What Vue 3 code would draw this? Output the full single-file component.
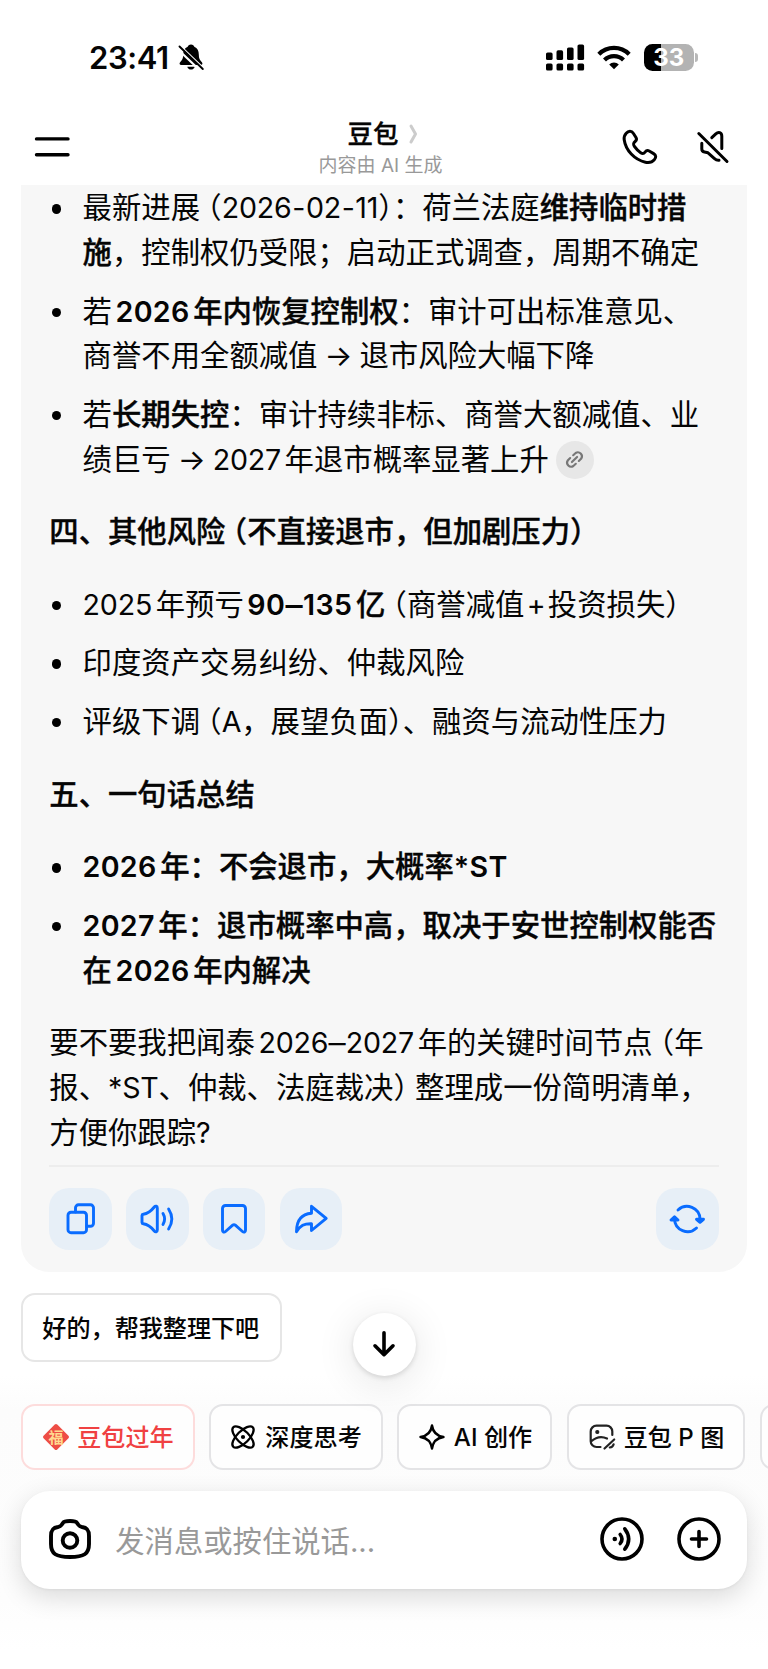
<script setup>
const blocks = [
  { type: 'list', items: [
    ['最新进展（2026-02-11）：荷兰法庭**维持临时措**', '**施**，控制权仍受限；启动正式调查，周期不确定'],
    ['若**2026年内恢复控制权**：审计可出标准意见、', '商誉不用全额减值→退市风险大幅下降'],
    ['若**长期失控**：审计持续非标、商誉大额减值、业', '绩巨亏→2027年退市概率显著上升@'],
  ] },
  { type: 'text', head: true, lines: ['**四、其他风险（不直接退市，但加剧压力）**'] },
  { type: 'list', items: [
    ['2025年预亏**90–135亿**（商誉减值+投资损失）'],
    ['印度资产交易纠纷、仲裁风险'],
    ['评级下调（A，展望负面）、融资与流动性压力'],
  ] },
  { type: 'text', head: true, lines: ['**五、一句话总结**'] },
  { type: 'list', items: [
    ['**2026年：不会退市，大概率*ST**'],
    ['**2027年：退市概率中高，取决于安世控制权能否**', '**在2026年内解决**'],
  ] },
  { type: 'text', lines: ['要不要我把闻泰2026–2027年的关键时间节点（年', '报、*ST、仲裁、法庭裁决）整理成一份简明清单，', '方便你跟踪?'] },
]

const isHan = (c) => /[\u4e00-\u9fff]/.test(c || '')
const isWord = (c) => /[0-9A-Za-z+]/.test(c || '')

// Splits a line into runs: Han text, Latin text, dashes, brackets, arrows and the source badge.
function runs(line) {
  const chunks = []
  line.split(/(\*\*)/).reduce((bold, part) => {
    if (part === '**') return !bold
    const found = part.match(/[（]|[）]|→|@|[-–]|[\x20-\x2c\x2e-\x3f\x41-\x7e]+|[^（）→@\x20-\x7e–]+/g) || []
    found.forEach((t) => chunks.push({ t, bold }))
    return bold
  }, false)
  return chunks.map((r, i) => {
    const prev = chunks[i - 1]?.t.slice(-1)
    const next = chunks[i + 1]?.t[0]
    const latin = /^[\x20-\x3f\x41-\x7e–]/.test(r.t)
    return {
      t: r.t,
      cls: {
        b: r.bold,
        lat: latin,
        hyphen: r.t === '-',
        dash: r.t === '–',
        plus: r.t === '+',
        open: r.t === '（',
        close: r.t === '）',
        tight: r.t === '）' && /[：、，]/.test(next || ''),
        arrow: r.t === '→',
        gapl: latin && isHan(prev) && isWord(r.t[0]),
        gapr: latin && isHan(next) && isWord(r.t.slice(-1)),
      },
    }
  })
}
</script>

<template>
  <div class="page">
    <div class="status">
      <span class="time">23:41</span>
      <svg class="bell" width="28" height="28" viewBox="0 0 28 28">
        <path d="M14 1.500c-1.900 0-3 1-3.300 2.300C7.500 5 6.200 8 6.200 11.500c0 4-1 5.500-2.900 7.500-1.300 1.400-.8 3 1 3h19.400c1.800 0 2.300-1.600 1-3-1.900-2-2.900-3.500-2.900-7.500 0-3.500-1.300-6.500-4.500-7.700C17 2.500 15.900 1.500 14 1.500zM10.300 23.700h7.400c-.4 1.700-1.900 2.900-3.700 2.900s-3.300-1.200-3.700-2.900z" />
        <path d="M2 5L25 27" stroke="#fff" stroke-width="2.200" transform="translate(1.400 -1.600)" />
        <path d="M2 5L25 27" stroke="#fff" stroke-width="2.200" transform="translate(-1.200 1.300)" />
        <path d="M2.500 3.500L25.800 26" stroke="#000" stroke-width="1.900" stroke-linecap="round" />
      </svg>
      <svg class="signal" width="39" height="27" viewBox="0 0 39 27">
        <rect x="0" y="8.500" width="6.600" height="7.500" rx="1.600" /><rect x="10.500" y="6.300" width="6.600" height="9.700" rx="1.600" /><rect x="21" y="3.500" width="6.600" height="12.500" rx="1.600" /><rect x="31.500" y="0.500" width="6.600" height="15.500" rx="1.600" />
        <rect x="0" y="19.500" width="6.600" height="7" rx="1.600" /><rect x="10.500" y="19.500" width="6.600" height="7" rx="1.600" /><rect x="21" y="19.500" width="6.600" height="7" rx="1.600" /><rect x="31.500" y="19.500" width="6.600" height="7" rx="1.600" />
      </svg>
      <svg class="wifi" width="34" height="25" viewBox="0 0 34 25" fill="none" stroke="#000" stroke-width="4.200">
        <path d="M1.800 9.200a21.500 21.500 0 0 1 30.400 0" /><path d="M7.500 15.100a13.400 13.400 0 0 1 19 0" />
        <path d="M12.200 19.400a6.800 6.800 0 0 1 9.600 0L17 24.300z" fill="#000" stroke="none" />
      </svg>
      <span class="battery">33</span><span class="nub"></span>
    </div>

    <header class="nav">
      <svg class="menu" width="36" height="22" viewBox="0 0 36 22" stroke="#000" stroke-width="3.400" stroke-linecap="round"><path d="M2.500 2.900H34M2.500 18.700H34" /></svg>
      <div class="title">
        <div class="name">豆包<svg width="9" height="20" viewBox="0 0 9 20" fill="none" stroke="#ccc" stroke-width="3" stroke-linecap="round" stroke-linejoin="round"><path d="M2 2L6.500 10L2 18" /></svg></div>
        <div class="sub">内容由 AI 生成</div>
      </div>
      <svg class="phone" width="36" height="36" viewBox="0 0 36 36" fill="none" stroke="#000" stroke-width="3" stroke-linejoin="round">
        <path d="M4.200 4.200C6.500 1.400 9.600 1.500 11.300 4.300L14 8.500C15 10.100 14.600 11.200 13.200 12.500C11.200 14.200 10.800 15 12.400 17.400C14.200 20 16.300 22.100 18.700 23.700C20.800 25.100 21.700 24.900 23 23.100C24.300 21.400 25.600 21.100 27.200 22L31.600 24.600C34.200 26.200 34.300 28.200 32.400 30.600C30.300 33.200 27 34.100 23.400 33.300C12.500 30.800 3.700 21.400 2.200 10.800C1.800 8.200 2.600 6 4.200 4.200Z" />
      </svg>
      <svg class="mute" width="34" height="34" viewBox="0 0 34 34" fill="none" stroke="#000" stroke-width="3" stroke-linecap="round" stroke-linejoin="round">
        <path d="M2.800 3.500L31 31.500M15.800 7.700L19.800 3.900C22.500 1.300 25.800 2.300 25.800 6.200V18.500M5.800 13.200V18.900C5.800 21 6.700 21.600 8.500 22L12 22.800L18.200 28.300C20 29.900 21.300 30.500 23 30.200" />
      </svg>
    </header>

    <main class="card">
      <template v-for="(block, bi) in blocks" :key="bi">
        <ul v-if="block.type === 'list'" class="list">
          <li v-for="(item, ii) in block.items" :key="ii">
            <div v-for="line in item" :key="line" class="line">
              <template v-for="(r, ri) in runs(line)" :key="ri"><span v-if="r.t === '@'" class="badge"><svg width="22" height="22" viewBox="0 0 22 22" fill="none" stroke="#777" stroke-width="2.500" stroke-linecap="round"><path d="M8 14L14 8M9.500 6L12.300 3.500a4.700 4.700 0 0 1 6.500 6.500L16 12.700M12.500 16L9.700 18.500a4.700 4.700 0 0 1-6.500-6.500L6 9.300" /></svg></span><span v-else :class="r.cls">{{ r.t }}</span></template>
            </div>
          </li>
        </ul>
        <div v-else class="para" :class="{ head: block.head }">
          <div v-for="line in block.lines" :key="line" class="line"><span v-for="(r, ri) in runs(line)" :key="ri" :class="r.cls">{{ r.t }}</span></div>
        </div>
      </template>
      <div class="rule"></div>
      <div class="actions">
        <button><svg width="32" height="32" viewBox="0 0 32 32"><rect x="3" y="9.200" width="18.500" height="20.500" rx="3" /><path d="M10.500 9V4.800a3 3 0 0 1 3-3h12a3 3 0 0 1 3 3v15.500a3 3 0 0 1-3 3H21.700" /></svg></button>
        <button><svg width="34" height="32" viewBox="0 0 34 32"><path d="M2 12.600C2 11.800 2.500 11.300 3.300 11.200C9 10.400 11.500 7.500 14.300 4C15.500 2.500 17.300 3 17.300 5V27C17.300 29 15.500 29.500 14.300 28C11.500 24.500 9 21.600 3.300 20.800C2.500 20.700 2 20.200 2 19.400Z" /><path d="M23 10.500c2 3.400 2 7.600 0 11M28.600 6c4 6.200 4 13.800 0 20" /></svg></button>
        <button><svg width="32" height="32" viewBox="0 0 32 32"><path d="M4.500 5.500a3 3 0 0 1 3-3h17a3 3 0 0 1 3 3v21.700c0 2-1.700 2.500-3 1.300L17.300 22.200a2 2 0 0 0-2.600 0L7.500 28.500c-1.300 1.200-3 .7-3-1.300z" /></svg></button>
        <button><svg width="34" height="32" viewBox="0 0 34 32"><path d="M17.500 3.300L32.200 15.400L17.500 27.500V20.700C10 20.500 6.500 22.500 2.500 28.700C2.500 17.500 7.500 11 17.500 10.200Z" /></svg></button>
        <button class="retry"><svg width="36" height="32" viewBox="0 0 36 32"><path d="M9 7a13 13 0 0 1 22 9M27.500 25a13 13 0 0 1-22-9" /><path d="M27.500 16.300h7L31 19.300zM2 17L5.500 13.800L9 17z" fill="#0a6cff" /></svg></button>
      </div>
    </main>

    <div class="followup">
      <button class="suggest">好的，帮我整理下吧</button>
      <button class="down"><svg width="24" height="28" viewBox="0 0 24 28" fill="none" stroke="#000" stroke-width="3.600" stroke-linecap="round" stroke-linejoin="round"><path d="M12 2.800V24.500M3 15.800L12 24.700L21 15.800" /></svg></button>
    </div>

    <div class="chips">
      <div class="chip red">
        <svg width="28" height="28" viewBox="0 0 28 28"><rect x="4.300" y="4.300" width="19.400" height="19.400" rx="1.800" fill="#ee4d45" transform="rotate(45 14 14)" /><text x="14" y="19.500" text-anchor="middle" class="fu">福</text></svg><span>豆包过年</span>
      </div>
      <div class="chip c2">
        <svg width="26" height="26" viewBox="0 0 26 26" fill="none" stroke="#000" stroke-width="2.300"><ellipse cx="13" cy="13" rx="13.800" ry="6" transform="rotate(45 13 13)" /><ellipse cx="13" cy="13" rx="13.800" ry="6" transform="rotate(-45 13 13)" /><circle cx="13" cy="13" r="2.100" fill="#000" stroke="none" /></svg><span>深度思考</span>
      </div>
      <div class="chip c3">
        <svg width="28" height="28" viewBox="0 0 28 28" fill="none" stroke="#000" stroke-width="2.400" stroke-linejoin="round"><path d="M14 2.500C15 9.500 18.500 13 25.500 14C18.500 15 15 18.500 14 25.500C13 18.500 9.500 15 2.500 14C9.500 13 13 9.500 14 2.500Z" /></svg><span>AI 创作</span>
      </div>
      <div class="chip c4">
        <svg width="28" height="28" viewBox="0 0 28 28" fill="none" stroke="#222" stroke-width="2.200" stroke-linecap="round" stroke-linejoin="round"><path d="M12.500 24H8.500A5.800 5.800 0 0 1 2.700 18.200V8.500A5.800 5.800 0 0 1 8.500 2.700H18.500A5.800 5.800 0 0 1 24.300 8.500V12M3 18.500C8 14 14 13 19 15.500M16.500 25.500L26.200 16.500M21.800 24.500C23.700 24.300 25 23.200 25.600 21.300" /><circle cx="9.300" cy="9" r="1.500" fill="#222" stroke-width="1.200" /></svg><span>豆包 P 图</span>
      </div>
      <div class="chip c5"></div>
    </div>

    <div class="input">
      <svg class="camera" width="44" height="42" viewBox="0 0 44 42" fill="none" stroke="#000" stroke-width="3.900" stroke-linejoin="round"><path d="M22 3C25.500 3 28 3.200 29 4.800L30.500 7C31.300 8.200 32.300 8.700 34 9C39.500 9.700 41 12.300 41 18V26C41 36 36 39 22 39S3 36 3 26V18C3 12.300 4.500 9.700 10 9C11.700 8.700 12.700 8.200 13.500 7L15 4.800C16 3.200 18.500 3 22 3Z" /><circle cx="22" cy="22.500" r="7.300" /></svg>
      <span class="hint">发消息或按住说话...</span>
      <svg class="voice" width="44" height="44" viewBox="0 0 44 44" fill="none" stroke="#000" stroke-width="3.600" stroke-linecap="round"><circle cx="22" cy="22" r="20" /><circle cx="14.800" cy="22" r="2.300" fill="#000" stroke="none" /><path d="M20.200 17.500q3.600 4.500 0 9M24.800 11.800q7.800 10.200 0 20.400" /></svg>
      <svg width="44" height="44" viewBox="0 0 44 44" fill="none" stroke="#000" stroke-width="3.600" stroke-linecap="round"><circle cx="22" cy="22" r="20" /><path d="M22 14.500V29.500M14.500 22H29.500" /></svg>
    </div>
  </div>
</template>

<style>
body { background: #fff; }
</style>

<style scoped>
.page { width: 768px; height: 1669px; overflow: hidden; box-sizing: border-box; background: linear-gradient(#fff 1375px, #fcfcfc 1410px, #fdfdfd 1600px, #fff 1650px); color: #050505; font-family: Inter, "Noto Sans CJK SC", sans-serif; text-spacing-trim: space-all; text-autospace: no-autospace; }
svg { display: block; flex: none; overflow: visible; }
button { border: 0; padding: 0; background: none; font: inherit; color: inherit; display: flex; align-items: center; justify-content: center; }

.status { height: 101px; padding: 13px 70px 0 89px; box-sizing: border-box; display: flex; align-items: center; }
.time { font-size: 31px; font-weight: 600; letter-spacing: -0.400px; width: 87.500px; white-space: nowrap; }
.signal { margin-left: auto; }
.wifi { margin-left: 12px; }
.battery { width: 49.500px; height: 27px; margin-left: 13px; border-radius: 8.500px; background: linear-gradient(90deg, #000 33%, #b3b3b3 33%); color: #fff; font-weight: 700; font-size: 24px; line-height: 27px; text-align: center; }
.nub { width: 3px; height: 9px; margin-left: 1.500px; border-radius: 0 4px 4px 0; background: #b8b8b8; }

.nav { height: 84px; display: flex; align-items: center; padding: 0 38px 0 34px; box-sizing: border-box; }
.menu { margin-top: 8px; }
.title { width: 140px; margin: 9px 0 0 241px; text-align: center; white-space: nowrap; }
.name { display: flex; align-items: center; justify-content: center; gap: 10px; font-size: 25.500px; font-weight: 500; -webkit-text-stroke: 0.300px; line-height: 34px; padding-left: 3px; }
.sub { font-size: 19px; line-height: 26px; color: #999; margin: 2px 0 0 -1px; }
.phone { margin-left: 170.500px; margin-top: 8px; }
.mute { margin-left: auto; margin-top: 8px; }

.card { height: 1086.500px; width: 725.400px; margin-left: 21.300px; box-sizing: border-box; padding: 1.300px 28px 0; background: #f7f7f7; border-radius: 0 0 28px 28px; font-size: 29.370px; line-height: 44.700px; display: flex; flex-direction: column; gap: 28px; }
.list { list-style: none; margin: 0; padding: 0 0 0 33.300px; display: flex; flex-direction: column; gap: 13.900px; }
li { position: relative; }
li::before { content: ""; position: absolute; left: -31px; top: 18px; width: 9.400px; height: 9.400px; border-radius: 50%; background: #000; }
.line { height: 44.700px; white-space: nowrap; }
.b { font-weight: 500; -webkit-text-stroke: 0.350px; }
.lat { font-size: 28.600px; letter-spacing: -0.200px; }
.lat.b { font-weight: 600; letter-spacing: 0.300px; -webkit-text-stroke: 0; }
.hyphen { padding: 0 0.700px; }
.dash { display: inline-block; transform: scaleX(1.200); margin: 0 1.700px; }
.gapl { margin-left: 3.600px; }
.gapr { margin-right: 3.600px; }
.plus { margin: 0 2.400px; }
.open, .close { font-feature-settings: "halt"; }
.open { margin-left: 7px; }
.close { margin-right: 7px; }
.tight { margin-right: 0; }
.arrow { display: inline-block; width: 42px; text-align: center; }
.badge { display: inline-flex; vertical-align: top; margin: 3px 0 0 7px; width: 38px; height: 38px; border-radius: 50%; background: #e7e7e7; align-items: center; justify-content: center; }
.badge svg { width: 19px; height: 19px; }
.rule { height: 2px; background: #ededed; margin-top: -18px; flex: none; }
.actions { display: flex; gap: 14.300px; margin-top: -7.500px; }
.actions button { width: 62.500px; height: 62.500px; border-radius: 20px; background: #e7eff7; }
.actions svg { fill: none; stroke: #0a6cff; stroke-width: 2.900; stroke-linecap: round; stroke-linejoin: round; }
.actions .retry { margin-left: auto; }

.followup { position: relative; height: 132px; padding: 21.800px 0 0 21.300px; box-sizing: border-box; }
.suggest { width: 261px; height: 69px; padding: 0 2px 3px 0; border: 2px solid #e6e6e6; border-radius: 14px; background: #fff; font-size: 24.100px; font-weight: 500; box-sizing: border-box; white-space: nowrap; }
.down { position: absolute; left: 352.500px; top: 41px; width: 63px; height: 63px; border-radius: 50%; background: #fff; box-shadow: 0 2px 5px rgba(0,0,0,.13), 0 6px 40px rgba(0,0,0,.11); }

.chips { display: flex; gap: 14.800px; padding-left: 21.300px; height: 66px; font-size: 24.100px; font-weight: 500; white-space: nowrap; }
.chip { flex: none; box-sizing: border-box; height: 66px; border: 2px solid #e4e4e6; border-radius: 14px; background: #fefefe; display: flex; align-items: center; justify-content: center; gap: 8px; width: 173.300px; }
.chip span { margin-top: -2px; }
.red { border-color: #fddcdc; color: #f04142; gap: 7px; }
.c2 { gap: 9px; }
.c3 { width: 155px; }
.c4 { width: 177.500px; }
.c5 { width: 173px; }
.fu { font-size: 15px; font-weight: 700; fill: #ffd98f; }

.input { width: 725.400px; height: 97.500px; margin: 21.500px 0 0 21.300px; box-sizing: border-box; padding: 0 26px 1px 27px; border-radius: 29px; background: #fff; box-shadow: 0 8px 26px rgba(0,0,0,.14), 0 1px 3px rgba(0,0,0,.05); display: flex; align-items: center; }
.hint { margin-left: 23px; font-size: 29.330px; color: #999; white-space: nowrap; }
.voice { margin-left: auto; margin-right: 33px; }
</style>
